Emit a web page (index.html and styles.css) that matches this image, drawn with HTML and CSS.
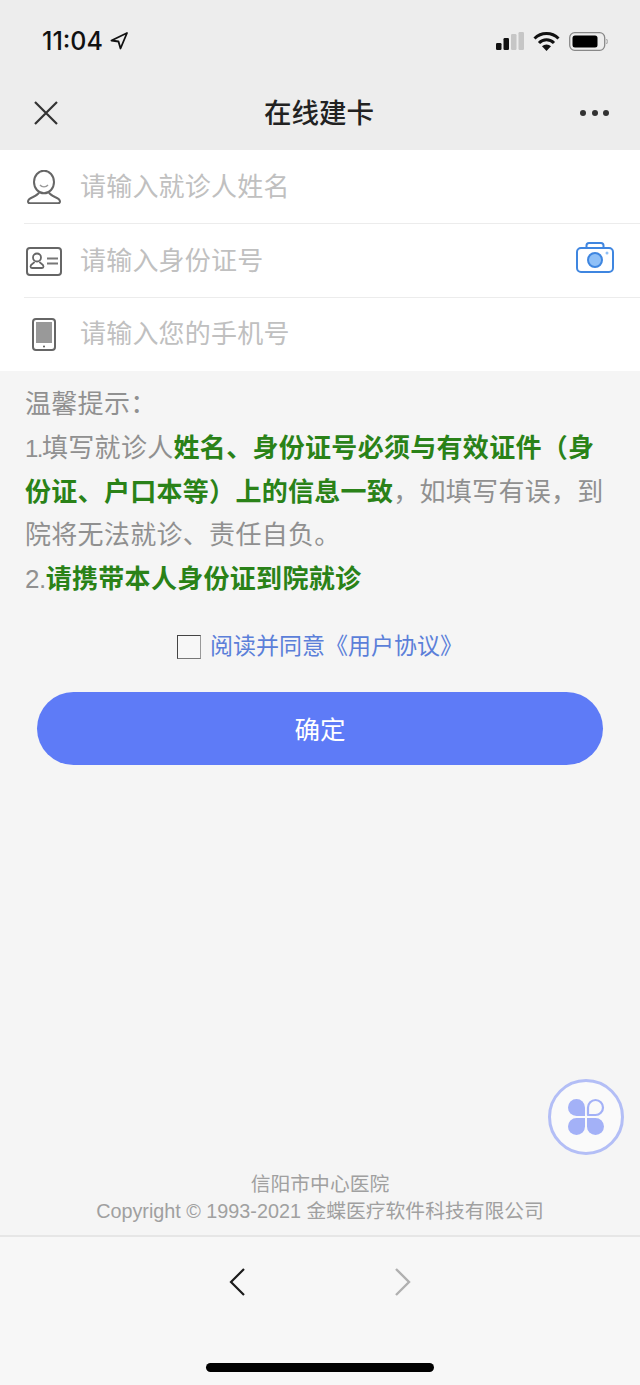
FILE: index.html
```html
<!DOCTYPE html>
<html lang="zh-CN">
<head>
    <meta charset="UTF-8">
    <meta name="viewport" content="width=device-width, initial-scale=1.0">
    <title>在线建卡</title>
    <link rel="stylesheet" href="styles.css">
</head>
<body>

<div class="page">
    <header class="top-bar">
        <div class="status-bar">
            <div class="status-time">
                <span>11:04</span>
                <svg viewBox="0 0 18 18" width="18" height="18"><path d="M17 1 1.500 8.500l7 1 2 7z" fill="none" stroke="#111" stroke-width="1.800" stroke-linejoin="round"/></svg>
            </div>
            <div class="status-icons">
                <svg viewBox="0 0 28 18" width="28" height="18">
                    <rect x="0" y="11" width="5.500" height="7" rx="1.200" fill="#111"/>
                    <rect x="7.500" y="6" width="5.500" height="12" rx="1.200" fill="#111"/>
                    <rect x="15" y="2" width="5.500" height="16" rx="1.200" fill="#c6c6c6"/>
                    <rect x="22.500" y="0" width="5.500" height="18" rx="1.200" fill="#c6c6c6"/>
                </svg>
                <svg viewBox="0 0 27 20" width="27" height="20">
                    <path d="M1.500 7.500a17 17 0 0 1 24 0M6 12a10.500 10.500 0 0 1 15 0" fill="none" stroke="#111" stroke-width="3"/>
                    <path d="M13.500 20 9 15.200a6.500 6.500 0 0 1 9 0z" fill="#111"/>
                </svg>
                <svg viewBox="0 0 39 19" width="39" height="19">
                    <rect x="0.700" y="0.700" width="35" height="17.600" rx="5" fill="none" stroke="#888" stroke-width="1.300"/>
                    <rect x="3.500" y="3.500" width="25" height="12" rx="2.500" fill="#000"/>
                    <path d="M37.500 7c1 .8 1 4.200 0 5" fill="none" stroke="#999" stroke-width="1"/>
                </svg>
            </div>
        </div>
        <div class="nav-bar">
            <svg viewBox="0 0 24 24" width="24" height="24"><path d="M1 1l22 22M23 1 1 23" stroke="#333" stroke-width="2.200" fill="none"/></svg>
            <h1 class="nav-title">在线建卡</h1>
            <div class="nav-more"><i></i><i></i><i></i></div>
        </div>
    </header>

    <form class="card-form">
        <div class="form-row">
            <span class="row-icon">
                <svg viewBox="0 0 34 34" width="34" height="34">
                    <ellipse cx="17" cy="12" rx="10" ry="11.300" fill="none" stroke="#666" stroke-width="2"/>
                    <path d="M13 15c2 2.500 6 2.500 8 0" fill="none" stroke="#999" stroke-width="1.400"/>
                    <path d="M12 22.500c-1 2-3 3-6 4.500-3 1.300-5 2.800-5 4.500 0 1.200.8 1.800 2 1.800h28c1.200 0 2-.6 2-1.800 0-1.700-2-3.200-5-4.500-3-1.500-5-2.500-6-4.500" fill="none" stroke="#666" stroke-width="2"/>
                </svg>
            </span>
            <span class="row-placeholder">请输入就诊人姓名</span>
        </div>
        <div class="form-row">
            <span class="row-icon">
                <svg viewBox="0 0 36 29" width="36" height="29">
                    <rect x="1" y="1" width="34" height="27" rx="3" fill="none" stroke="#666" stroke-width="2"/>
                    <circle cx="11" cy="10.500" r="4" fill="none" stroke="#666" stroke-width="1.800"/>
                    <path d="M8.500 15c-1 1.500-4 2-4 4.500 0 1 .5 1.500 1.500 1.500h10c1 0 1.500-.5 1.500-1.500 0-2.500-3-3-4-4.500" fill="none" stroke="#666" stroke-width="1.800"/>
                    <path d="M21 11.500h11M21 16.500h11" stroke="#777" stroke-width="1.800"/>
                </svg>
            </span>
            <span class="row-placeholder">请输入身份证号</span>
            <svg class="row-camera" viewBox="0 0 38 31" width="38" height="31">
                <path d="M10.500 6V3.500C10.500 2 11.500 1 13 1h12c1.500 0 2.500 1 2.500 2.500V6" fill="none" stroke="#3f86e0" stroke-width="2"/>
                <rect x="1" y="6" width="36" height="24" rx="4" fill="none" stroke="#3f86e0" stroke-width="2"/>
                <circle cx="19" cy="18" r="7" fill="#8fc0f7" stroke="#3f86e0" stroke-width="2"/>
                <circle cx="31" cy="11" r="1.500" fill="#8fc0f7"/>
            </svg>
        </div>
        <div class="form-row">
            <span class="row-icon">
                <svg viewBox="0 0 24 33" width="24" height="33">
                    <rect x="1" y="1" width="22" height="31" rx="3" fill="none" stroke="#666" stroke-width="2"/>
                    <rect x="4" y="4" width="16" height="21" fill="#999"/>
                    <circle cx="12" cy="28.500" r="1" fill="#555"/>
                </svg>
            </span>
            <span class="row-placeholder">请输入您的手机号</span>
        </div>
    </form>

    <section class="tips">
        <p>温馨提示：</p>
        <p><span class="tips-num-narrow">1.</span>填写就诊人<b>姓名、身份证号必须与有效证件（身份证、户口本等）上的信息一致</b>，如填写有误，到院将无法就诊、责任自负。</p>
        <p><span class="tips-num">2.</span><b>请携带本人身份证到院就诊</b></p>
    </section>

    <label class="agree">
        <span class="agree-box"></span>
        <span class="agree-text">阅读并同意《用户协议》</span>
    </label>

    <button type="button" class="btn-submit">确定</button>

    <div class="float-menu">
        <svg viewBox="0 0 40 40" width="40" height="40">
            <path d="M19 19H10.500a8.500 8.500 0 1 1 8.500-8.500z" fill="#a3b1f7"/>
            <path d="M22 18v-7.500a7.500 7.500 0 1 1 7.500 7.500z" fill="none" stroke="#a3b1f7" stroke-width="2.200" stroke-linejoin="round"/>
            <path d="M19 21v8.500a8.500 8.500 0 1 1-8.500-8.500z" fill="#a3b1f7"/>
            <path d="M21 21h8.500a8.500 8.500 0 1 1-8.500 8.500z" fill="#a3b1f7"/>
        </svg>
    </div>

    <footer class="copyright">
        <p>信阳市中心医院</p>
        <p>Copyright © 1993-2021 金蝶医疗软件科技有限公司</p>
    </footer>

    <div class="bottom-bar">
        <div class="bottom-arrows">
            <svg viewBox="0 0 16 28" width="16" height="28"><path d="M15 1 2 14l13 13" fill="none" stroke="#1c1c1c" stroke-width="2.200"/></svg>
            <svg viewBox="0 0 16 28" width="16" height="28"><path d="M1 1l13 13L1 27" fill="none" stroke="#b0b0b0" stroke-width="2.400"/></svg>
        </div>
        <div class="home-bar"></div>
    </div>
</div>

</body>
</html>
```

FILE: styles.css
```css
* {
    box-sizing: border-box;
}

body {
    margin: 0;
    font-family: 'Liberation Sans', 'Noto Sans CJK SC', sans-serif;
    background-color: #f5f5f5;
}

p, h1 {
    margin: 0;
}

.page {
    position: relative;
    width: 640px;
    height: 1385px;
    display: flex;
    flex-direction: column;
}

.top-bar {
    height: 150px;
    background-color: #ededed;
}

.status-bar {
    height: 82px;
    padding: 26px 32px 0 42px;
    display: flex;
    justify-content: space-between;
    align-items: flex-start;
}

.status-time {
    display: flex;
    align-items: center;
    gap: 7px;
    height: 30px;
    font-family: 'Inter', 'Liberation Sans', sans-serif;
    font-size: 25px;
    font-weight: 500;
    color: #111;
}

.status-icons {
    display: flex;
    align-items: center;
    gap: 9px;
    height: 30px;
}

.nav-bar {
    height: 68px;
    padding: 0 31px 0 34px;
    display: flex;
    align-items: center;
    justify-content: space-between;
}

.nav-title {
    font-size: 27.5px;
    font-weight: 500;
    color: #222;
    line-height: 1;
    margin-top: -5px;
}

.nav-bar svg {
    margin-top: -6px;
}

.nav-more {
    display: flex;
    gap: 5.5px;
    margin-top: -7px;
}

.nav-more i {
    width: 6px;
    height: 6px;
    border-radius: 50%;
    background-color: #333;
}

.card-form {
    background-color: #fff;
}

.form-row {
    position: relative;
    height: 74px;
    padding-left: 24px;
    display: flex;
    align-items: center;
}

.form-row:last-child {
    height: 73px;
}

.form-row + .form-row::before {
    content: '';
    position: absolute;
    left: 24px;
    right: 0;
    top: -1px;
    height: 1px;
    background-color: #ececec;
}

.row-icon {
    flex: none;
    width: 40px;
    margin-right: 16px;
    display: flex;
    justify-content: center;
}

.row-placeholder {
    padding-bottom: 6px;
    font-size: 26px;
    letter-spacing: 0.2px;
    color: #c0c0c0;
}

.row-camera {
    position: absolute;
    right: 26px;
    top: 18px;
}

.tips {
    padding: 12px 26px 0 25px;
    font-size: 26px;
    letter-spacing: 0.3px;
    line-height: 43.75px;
    color: #909090;
}

.tips b {
    color: #2a8218;
    font-weight: 700;
}

.tips-num {
    letter-spacing: -0.5px;
}

.tips-num-narrow {
    font-size: 24px;
    letter-spacing: -1.5px;
}

.agree {
    margin-top: 22px;
    height: 44px;
    display: flex;
    align-items: center;
    justify-content: center;
    gap: 9px;
}

.agree-box {
    width: 24px;
    height: 24px;
    margin-top: 2px;
    border: 1.5px solid;
    border-color: #444 #999 #777 #444;
    background-color: #f7f7f7;
}

.agree-text {
    padding-bottom: 4px;
    font-size: 23px;
    color: #5b7fd9;
}

.btn-submit {
    display: block;
    width: 566px;
    height: 73px;
    margin: 24px 0 0 37px;
    padding: 0 0 2px;
    border: none;
    border-radius: 37px;
    background-color: #5e7bf7;
    color: #fff;
    font-family: inherit;
    font-size: 25.5px;
}

.float-menu {
    position: absolute;
    left: 548px;
    top: 1079px;
    width: 76px;
    height: 76px;
    border: 3.5px solid #b3bef6;
    border-radius: 50%;
    background-color: #fafafa;
    display: flex;
    align-items: center;
    justify-content: center;
}

.copyright {
    margin-top: auto;
    height: 64px;
    text-align: center;
    font-size: 19.8px;
    line-height: 27px;
    color: #a0a0a0;
}

.bottom-bar {
    height: 150px;
    border-top: 2px solid #e6e6e6;
    background-color: #f7f7f7;
}

.bottom-arrows {
    display: flex;
    justify-content: center;
    gap: 150px;
    padding: 31px 0 0;
}

.home-bar {
    width: 228px;
    height: 9px;
    margin: 67px auto 0;
    border-radius: 5px;
    background-color: #000;
}
```
